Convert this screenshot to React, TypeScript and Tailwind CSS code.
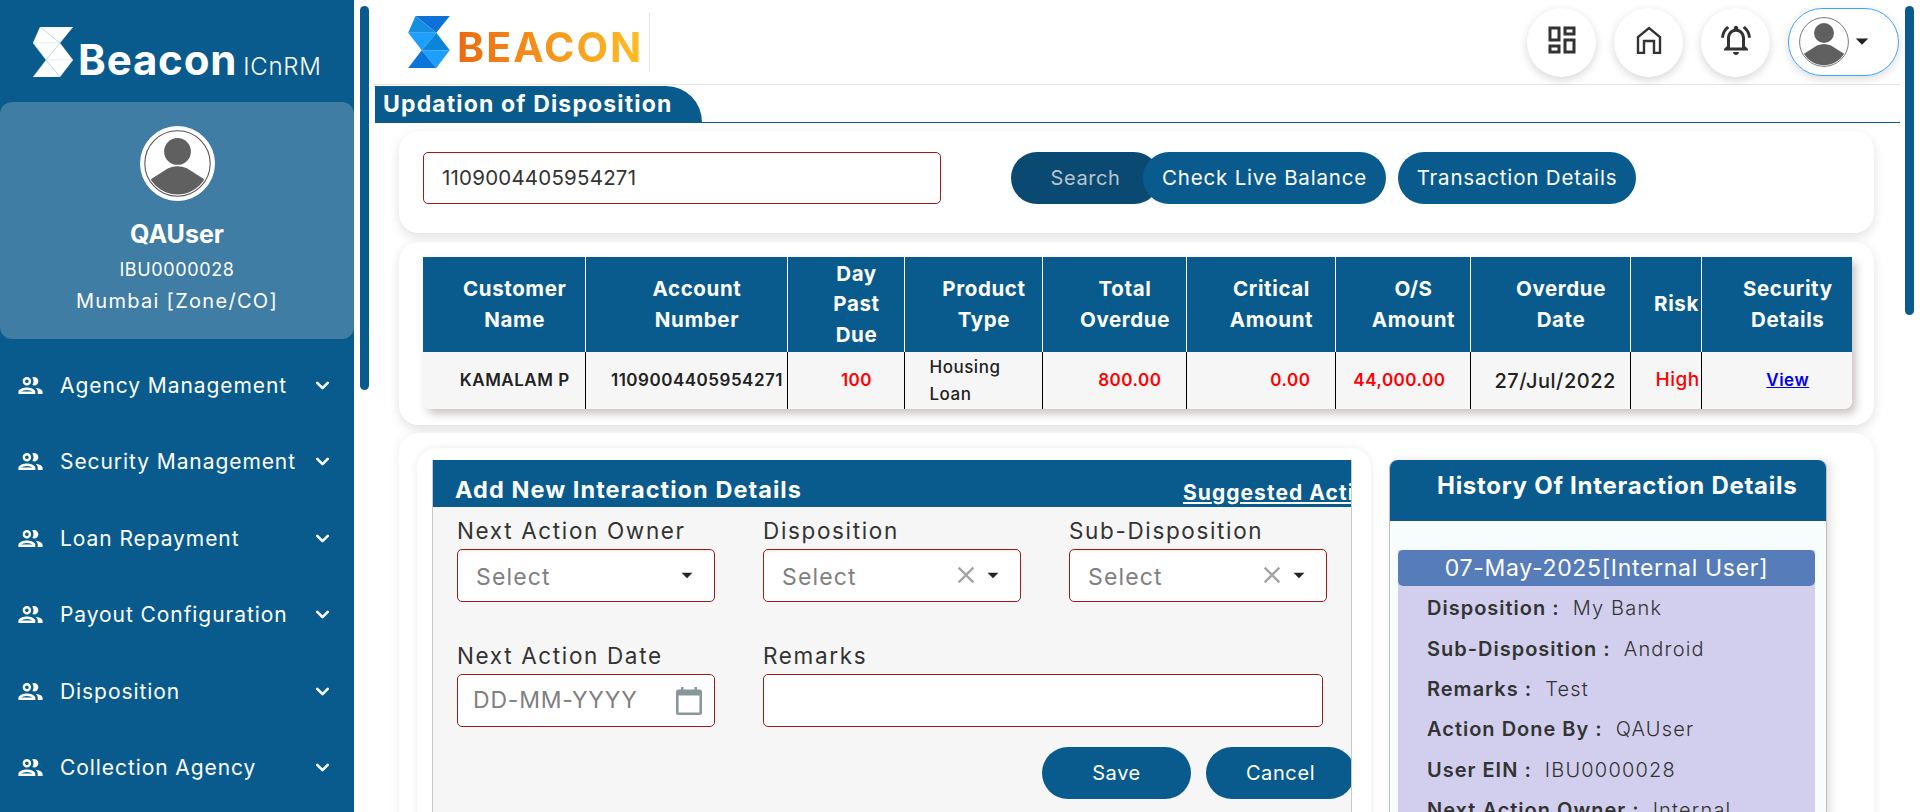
import { ChevronDown } from "lucide-react";
import { MdClose, MdOutlineGroup, MdOutlineNotificationsActive, MdOutlineDashboard, MdArrowDropDown } from "react-icons/md";

const menuItems = [
  "Agency Management",
  "Security Management",
  "Loan Repayment",
  "Payout Configuration",
  "Disposition",
  "Collection Agency",
];

const headers = [
  { w: "w-[162px]", lines: ["Customer", "Name"] },
  { w: "w-[202px]", lines: ["Account", "Number"] },
  { w: "w-[117px]", lines: ["Day", "Past", "Due"] },
  { w: "w-[138px]", lines: ["Product", "Type"] },
  { w: "w-[144px]", lines: ["Total", "Overdue"] },
  { w: "w-[149px]", lines: ["Critical", "Amount"] },
  { w: "w-[135px]", lines: ["O/S", "Amount"] },
  { w: "w-[160px]", lines: ["Overdue", "Date"] },
  { w: "w-[71px]", lines: ["Risk"] },
  { w: "w-[151px]", lines: ["Security", "Details"] },
];

const history = [
  ["Disposition :", "My Bank"],
  ["Sub-Disposition :", "Android"],
  ["Remarks :", "Test"],
  ["Action Done By :", "QAUser"],
  ["User EIN :", "IBU0000028"],
  ["Next Action Owner :", "Internal"],
];

function BeaconMark({ className, colors, line }: { className: string; colors: string[]; line?: string }) {
  return (
    <svg viewBox="0 0 40 50" className={className} stroke={line} strokeWidth={line ? 0.3 : 0}>
      <polygon points="7,0 40,0 27,16" fill={colors[0]} />
      <polygon points="7,0 27,16 0,16" fill={colors[1]} />
      <polygon points="0,16 27,16 13,33" fill={colors[2]} />
      <polygon points="27,16 40,33 13,33" fill={colors[3]} />
      <polygon points="13,33 40,33 27,50" fill={colors[4]} />
      <polygon points="13,33 27,50 0,50" fill={colors[5]} />
    </svg>
  );
}

function Avatar({ className }: { className: string }) {
  return (
    <svg viewBox="0 0 50 50" className={className}>
      <circle cx="25" cy="25" r="24.4" fill="#fff" stroke="#555" strokeWidth="0.8" />
      <clipPath id="avatarClip">
        <circle cx="25" cy="25" r="23.2" />
      </clipPath>
      <circle cx="25" cy="16" r="10" fill="#606060" />
      <path d="M3 38 L18 28.5 Q25 25.5 32 28.5 L47 38 V50 H3 Z" fill="#606060" clipPath="url(#avatarClip)" />
    </svg>
  );
}

function HouseIcon() {
  return (
    <svg viewBox="0 0 26 28" className="w-[26px] h-[28px] mb-[4px]" fill="none" stroke="#333" strokeWidth="2.4">
      <path d="M2 27 V11 L13 2 L24 11 V27 H18 V15 H8 V27 Z" />
    </svg>
  );
}

function CalendarIcon() {
  return (
    <svg viewBox="0 0 26 28" className="w-[26px] h-[28px]">
      <rect x="5" y="0" width="2.5" height="4" fill="#87979a" />
      <rect x="18.5" y="0" width="2.5" height="4" fill="#87979a" />
      <rect x="0" y="2.5" width="26" height="25.5" rx="2.5" fill="#87979a" />
      <rect x="2.6" y="8.5" width="20.8" height="17" fill="#fff" />
    </svg>
  );
}

function SelectBox({ clear }: { clear?: boolean }) {
  return (
    <div className="flex items-center h-[53px] w-[258px] rounded-[5px] border border-[#9c1c1c] bg-white pl-[18px] pr-[14px] shadow-[inset_0_3px_3px_-2px_#e5e5e5]">
      <span className="flex-1 pt-[3px] text-[23px] tracking-[0.05em] text-[#808080]">Select</span>
      {clear && <MdClose className="text-[#a3a3a3] text-[28px] -mt-[2px]" />}
      <MdArrowDropDown className="text-[#222] text-[26px] -mt-[2px]" />
    </div>
  );
}

export default function App() {
  return (
    <div className="relative flex h-[812px] w-full overflow-hidden bg-white font-['Inter',sans-serif] text-[#333]">
      <aside className="w-[354px] shrink-0 bg-[#085b8c] text-white">
        <div className="flex items-end h-[102px] pl-[33px] pb-[25px]">
          <BeaconMark className="w-[40px] h-[50px]" colors={["#fff", "#fff", "#fff", "#fff", "#fff", "#fff"]} line="#c3d4e1" />
          <span className="ml-[5px] text-[42px] leading-[34px] font-bold tracking-[0.02em]">Beacon</span>
          <span className="ml-[6px] text-[24px] leading-[20px] font-light tracking-[0.03em]">ICnRM</span>
        </div>
        <div className="flex flex-col items-center h-[237px] rounded-[12px] bg-[#3f7da4] pt-[24px]">
          <div className="rounded-full border-[3px] border-double border-white bg-white p-[1px]">
            <Avatar className="w-[67px] h-[67px]" />
          </div>
          <div className="mt-[17px] text-[25px] font-bold leading-[32px]">QAUser</div>
          <div className="mt-[8px] text-[18px] leading-[24px] tracking-[0.035em]">IBU0000028</div>
          <div className="mt-[6px] text-[20px] leading-[26px] tracking-[0.065em]">Mumbai [Zone/CO]</div>
        </div>
        <nav className="mt-[8px]">
          {menuItems.map((item) => (
            <div key={item} className="flex items-center h-[76.5px] pl-[16px] pr-[21px]">
              <MdOutlineGroup className="text-[29px] shrink-0" />
              <span className="flex-1 ml-[15px] text-[21px] tracking-[0.044em] whitespace-nowrap">{item}</span>
              <ChevronDown className="w-[21px] h-[21px]" strokeWidth={3} />
            </div>
          ))}
        </nav>
      </aside>

      <main className="flex-1 min-w-0 pl-[21px] pr-[20px]">
        <header className="flex items-center justify-between h-[85px] border-b border-[#e3e3e3]">
          <div className="flex items-center w-[275px] pl-[33px] border-r border-[#e8e8e8] h-[60px]">
            <BeaconMark className="w-[42px] h-[52px]" colors={["#0c72d8", "#1590e0", "#1e9eff", "#0a86d8", "#1e9eff", "#0b74d8"]} />
            <span className="ml-[7px] mt-[10px] text-[41px] leading-[40px] font-bold tracking-[0.05em] text-transparent bg-clip-text bg-gradient-to-r from-[#ea6a12] to-[#fdbe25]">
              BEACON
            </span>
          </div>
          <div className="flex items-center">
            <button className="flex items-center justify-center w-[69px] h-[69px] rounded-full bg-white shadow-[0_3px_10px_rgba(0,0,0,0.16)]">
              <MdOutlineDashboard className="text-[36px] text-[#333] mb-[4px]" />
            </button>
            <button className="flex items-center justify-center w-[69px] h-[69px] ml-[18px] rounded-full bg-white shadow-[0_3px_10px_rgba(0,0,0,0.16)]">
              <HouseIcon />
            </button>
            <button className="flex items-center justify-center w-[69px] h-[69px] ml-[18px] rounded-full bg-white shadow-[0_3px_10px_rgba(0,0,0,0.16)]">
              <MdOutlineNotificationsActive className="text-[36px] text-[#333] mb-[4px]" />
            </button>
            <button className="flex items-center w-[111px] h-[68px] ml-[18px] mr-px rounded-[34px] border border-[#3ea6ff] bg-white pl-[10px] shadow-[0_3px_8px_rgba(0,0,0,0.14)]">
              <Avatar className="w-[50px] h-[50px]" />
              <MdArrowDropDown className="text-[30px] text-[#222] -mt-[2px] -ml-[2px]" />
            </button>
          </div>
        </header>

        <div className="mt-px border-b border-[#085b8c] h-[37px]">
          <div className="flex items-center w-[327px] h-[36px] rounded-tr-[38px] bg-[#085b8c] pl-[8px] text-[23px] font-bold text-white tracking-[0.05em] whitespace-nowrap">
            Updation of Disposition
          </div>
        </div>

        <section className="ml-[24px] w-[1475px] h-[102px] mt-[8px] rounded-[20px] bg-white pl-[24px] pt-[21px] shadow-[0_4px_12px_rgba(0,0,0,0.12)]">
          <div className="flex items-center">
            <div className="flex items-center w-[518px] h-[52px] rounded-[5px] border border-[#9c1c1c] pl-[18px] text-[20.5px] tracking-[0.01em] text-[#333]">
              1109004405954271
            </div>
            <button className="w-[149px] h-[52px] ml-[70px] rounded-[26px] bg-[#0a4a72] text-[20px] text-[#b8c4cc] tracking-[0.03em]">Search</button>
            <button className="w-[243px] h-[52px] -ml-[17px] rounded-[26px] bg-[#085b8c] text-[20.5px] text-white tracking-[0.04em]">Check Live Balance</button>
            <button className="w-[238px] h-[52px] ml-[12px] rounded-[26px] bg-[#085b8c] text-[20.5px] text-white tracking-[0.04em]">Transaction Details</button>
          </div>
        </section>

        <section className="ml-[24px] w-[1475px] h-[183px] mt-[9px] rounded-[20px] bg-white pl-[24px] pt-[15px] shadow-[0_4px_12px_rgba(0,0,0,0.12)]">
          <table className="w-[1429px] table-fixed border-collapse overflow-hidden rounded-b-[8px] shadow-[4px_5px_8px_rgba(90,60,60,0.3)]">
            <thead>
              <tr className="h-[95px] bg-[#085b8c] text-white">
                {headers.map((h) => (
                  <th key={h.lines[0]} className={`${h.w} border-r border-white last:border-r-0 pl-[22px] text-[20.5px] leading-[30.5px] font-bold tracking-[0.03em] whitespace-nowrap`}>
                    {h.lines.map((line) => (
                      <div key={line}>{line}</div>
                    ))}
                  </th>
                ))}
              </tr>
            </thead>
            <tbody>
              <tr className="h-[57px] bg-[#f6f6f6] text-[17px] font-semibold tracking-[0.03em] text-[#222]">
                <td className="border-r border-black pl-[22px] text-center whitespace-nowrap">KAMALAM P</td>
                <td className="border-r border-black pl-[22px] text-center whitespace-nowrap">1109004405954271</td>
                <td className="border-r border-black pl-[22px] text-center text-[#f00]">100</td>
                <td className="border-r border-black pl-[25px] leading-[27px] font-medium">Housing<br />Loan</td>
                <td className="border-r border-black pr-[24px] text-right text-[#f00]">800.00</td>
                <td className="border-r border-black pr-[24px] text-right text-[#f00]">0.00</td>
                <td className="border-r border-black pr-[24px] text-right text-[#f00] whitespace-nowrap">44,000.00</td>
                <td className="border-r border-black pl-[24px] text-[20px] font-medium whitespace-nowrap">27/Jul/2022</td>
                <td className="border-r border-black pl-[25px] text-[19px] font-medium text-[#f00]">High</td>
                <td className="pl-[22px] text-center"><a className="text-[#00e] underline">View</a></td>
              </tr>
            </tbody>
          </table>
        </section>

        <section className="ml-[24px] w-[1475px] h-[400px] mt-[8px] rounded-t-[20px] bg-white pt-[15px] pl-[18px] flex shadow-[0_2px_12px_rgba(0,0,0,0.08)]">
          <div className="w-[954px] h-[400px] rounded-t-[20px] bg-white pl-[15px] pt-[12px] shadow-[0_0_8px_rgba(0,0,0,0.08)]">
            <div className="w-[920px] h-[360px] overflow-hidden bg-[#f6f6f6] border-x border-[#c8c8c8]">
              <div className="flex items-center justify-between h-[47px] bg-[#085b8c] text-white whitespace-nowrap overflow-hidden">
                <span className="pl-[22px] pt-[13px] text-[23.5px] font-bold tracking-[0.045em]">Add New Interaction Details</span>
                <span className="w-[168px] shrink-0 pt-[19px] text-[21px] font-bold tracking-[0.05em] underline overflow-hidden">Suggested Action</span>
              </div>
              <div className="pl-[24px]">
                <div className="flex gap-[48px] mt-[10px]">
                  <div className="w-[258px]">
                    <div className="text-[22.5px] leading-[28px] tracking-[0.073em] mb-[4px] whitespace-nowrap">Next Action Owner</div>
                    <SelectBox />
                  </div>
                  <div className="w-[258px]">
                    <div className="text-[22.5px] leading-[28px] tracking-[0.073em] mb-[4px]">Disposition</div>
                    <SelectBox clear />
                  </div>
                  <div className="w-[258px]">
                    <div className="text-[22.5px] leading-[28px] tracking-[0.073em] mb-[4px]">Sub-Disposition</div>
                    <SelectBox clear />
                  </div>
                </div>
                <div className="flex gap-[48px] mt-[40px]">
                  <div className="w-[258px]">
                    <div className="text-[22.5px] leading-[28px] tracking-[0.073em] mb-[4px] whitespace-nowrap">Next Action Date</div>
                    <div className="flex items-center justify-between h-[53px] rounded-[5px] border border-[#9c1c1c] bg-white pl-[15px] pr-[12px]">
                      <span className="text-[23px] tracking-[0.035em] text-[#808080] whitespace-nowrap">DD-MM-YYYY</span>
                      <CalendarIcon />
                    </div>
                  </div>
                  <div>
                    <div className="text-[22.5px] leading-[28px] tracking-[0.073em] mb-[4px]">Remarks</div>
                    <div className="w-[560px] h-[53px] rounded-[5px] border border-[#9c1c1c] bg-white" />
                  </div>
                </div>
                <div className="flex mt-[20px] pl-[585px] gap-[15px] w-[1000px]">
                  <button className="w-[149px] h-[52px] shrink-0 rounded-[26px] bg-[#085b8c] text-[20px] text-white tracking-[0.03em]">Save</button>
                  <button className="w-[149px] h-[52px] shrink-0 rounded-[26px] bg-[#085b8c] text-[20px] text-white tracking-[0.03em]">Cancel</button>
                </div>
              </div>
            </div>
          </div>

          <div className="ml-[18px] w-[438px] h-[360px] mt-[12px] rounded-t-[8px] bg-[#f7fcfc] border-x border-[#c0c0c0] shadow-[4px_0_8px_rgba(90,60,60,0.15)]">
            <div className="h-[61px] rounded-t-[8px] bg-[#085b8c] pt-[10px] pl-[47px] text-[24px] leading-[32px] font-bold tracking-[0.03em] text-white whitespace-nowrap">
              History Of Interaction Details
            </div>
            <div className="mt-[29px] ml-[8px] w-[417px] h-[300px] bg-[#d1cfed] overflow-hidden">
              <div className="h-[36px] rounded-[5px] bg-[#567cba] text-center text-[23px] leading-[36px] tracking-[0.03em] text-white whitespace-nowrap">
                07-May-2025[Internal User]
              </div>
              <div className="pl-[29px]">
                {history.map(([label, value]) => (
                  <div key={label} className="flex h-[40.4px] items-center text-[20px] whitespace-nowrap first:mt-[2px]">
                    <span className="font-semibold tracking-[0.05em]">{label}</span>
                    <span className="ml-[13px] font-light tracking-[0.06em]">{value}</span>
                  </div>
                ))}
              </div>
            </div>
          </div>
        </section>
      </main>

      <div className="absolute left-[360px] top-[6px] w-[9px] h-[384px] rounded-[5px] bg-[#085b8c]" />
      <div className="absolute left-[1905px] top-[6px] w-[9px] h-[309px] rounded-[5px] bg-[#085b8c]" />
    </div>
  );
}
